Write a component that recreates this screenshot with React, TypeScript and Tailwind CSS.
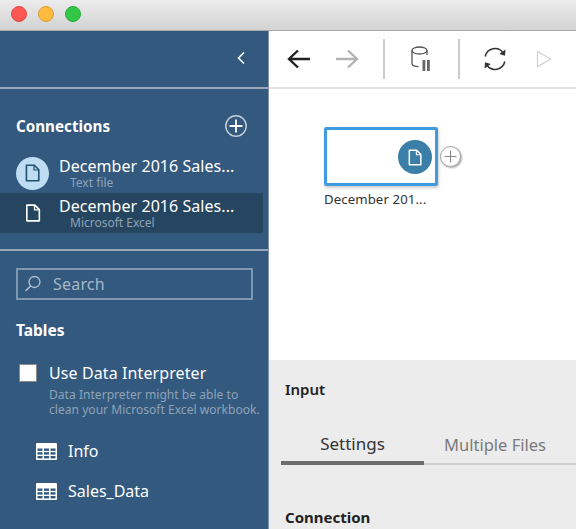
import React from "react";

const FONT = "font-['Noto_Sans','Open_Sans',sans-serif]";

function DocIcon({ className, stroke, fill = "none" }: { className: string; stroke: string; fill?: string }) {
  return (
    <svg viewBox="0 0 16 19" className={className} fill="none">
      <path d="M1.5 1.2H10L14.7 6V17.8H1.5Z" stroke={stroke} strokeWidth="1.7" fill={fill} strokeLinejoin="round" />
      <path d="M9.6 1.2V6.3H14.7" stroke={stroke} strokeWidth="1.3" />
    </svg>
  );
}

function TableIcon() {
  return (
    <svg viewBox="0 0 21 17" className="w-[21px] h-[17px] shrink-0">
      <rect width="21" height="17" rx="1" fill="#fff" />
      <g fill="#33597f">
        <rect x="1.5" y="5.5" width="5" height="2.4" />
        <rect x="8" y="5.5" width="5" height="2.4" />
        <rect x="14.5" y="5.5" width="5" height="2.4" />
        <rect x="1.5" y="9.2" width="5" height="2.4" />
        <rect x="8" y="9.2" width="5" height="2.4" />
        <rect x="14.5" y="9.2" width="5" height="2.4" />
        <rect x="1.5" y="13" width="5" height="2.4" />
        <rect x="8" y="13" width="5" height="2.4" />
        <rect x="14.5" y="13" width="5" height="2.4" />
      </g>
    </svg>
  );
}

function Conn({ sub, selected, icon }: { sub: string; selected?: boolean; icon: React.ReactNode }) {
  return (
    <div className={`flex items-start h-10 w-[263px] ${selected ? "bg-[#264560]" : ""}`}>
      <div className="w-[59px] shrink-0 h-10 flex items-center justify-center">{icon}</div>
      <div className="flex flex-col">
        <span className="text-[16px] leading-[20px] text-white whitespace-nowrap tracking-[0.05px] mt-[3px]">December 2016 Sales...</span>
        <span className="text-[12px] leading-[14px] text-[#8ea3b8] pl-[11px] whitespace-nowrap">{sub}</span>
      </div>
    </div>
  );
}

export default function App() {
  return (
    <div className={`${FONT} w-[576px] h-[529px] overflow-hidden flex flex-col bg-white`}>
      <div className="h-[31px] shrink-0 bg-gradient-to-b from-[#ebebeb] to-[#d3d3d3] border-b border-[#a8a8a8] flex items-center gap-[11px] pl-[11px] pb-[2px]">
        <span className="w-[16px] h-[16px] rounded-full bg-[#fc5753] border border-[#df4744]" />
        <span className="w-[16px] h-[16px] rounded-full bg-[#fdbc40] border border-[#de9f34]" />
        <span className="w-[16px] h-[16px] rounded-full bg-[#33c748] border border-[#27aa35]" />
      </div>
      <div className="flex-1 flex min-h-0">
        <aside className="w-[269px] shrink-0 bg-[#33597f] border-r border-[#7d93aa] flex flex-col">
          <div className="h-[58px] shrink-0 flex items-center justify-end pr-[22px] border-b-2 border-[#97a8ba]">
            <svg viewBox="0 0 10 14" className="w-[10px] h-[14px] mt-[-2px]" fill="none">
              <path d="M8 1.5 2.5 7 8 12.5" stroke="#fff" strokeWidth="1.6" />
            </svg>
          </div>
          <div className="flex items-center justify-between pl-4 pr-[20px] mt-[24px] h-[26px]">
            <span className="text-[15.2px] font-bold text-white">Connections</span>
            <svg viewBox="0 0 24 24" className="w-[24px] h-[24px]" fill="none">
              <circle cx="12" cy="12" r="10.2" stroke="#c3ced9" strokeWidth="1.5" />
              <path d="M12 5.5V18.5M5.5 12H18.5" stroke="#fff" strokeWidth="1.8" />
            </svg>
          </div>
          <div className="mt-[14px] flex flex-col">
            <Conn
              sub="Text file"
              icon={
                <span className="w-[33px] h-[33px] ml-[5px] rounded-full bg-[#bedcf2] flex items-center justify-center">
                  <DocIcon className="w-[15px] h-[18px]" stroke="#20526f" />
                </span>
              }
            />
            <Conn
              selected
              sub="Microsoft Excel"
              icon={<DocIcon className="w-[16px] h-[18px] ml-[6px]" stroke="#fff" />}
            />
          </div>
          <div className="mt-[16px] h-[2px] bg-[#97a8ba] shrink-0" />
          <div className="mt-[17px] mx-4 h-[32px] w-[237px] border-2 border-[#7d98b3] flex items-center">
            <svg viewBox="0 0 18 18" className="w-[18px] h-[18px] ml-[6px]" fill="none">
              <circle cx="10.5" cy="7" r="5.5" stroke="#b4c3d2" strokeWidth="1.3" />
              <path d="M6.5 11 1.5 16" stroke="#b4c3d2" strokeWidth="1.5" />
            </svg>
            <span className="ml-[11px] text-[16px] text-[#a6b6c6] tracking-[0.2px]">Search</span>
          </div>
          <div className="mt-[18px] pl-4 text-[15.5px] leading-[24px] font-bold text-white">Tables</div>
          <div className="mt-[21px] flex pl-[19px]">
            <span className="w-[18px] h-[18px] mt-[1px] shrink-0 bg-white border border-[#8f8a86] rounded-[1px]" />
            <div className="ml-3 flex flex-col">
              <span className="text-[16px] leading-[20px] text-white whitespace-nowrap tracking-[0.1px]">Use Data Interpreter</span>
              <span className="text-[12.1px] leading-[15px] text-[#8ea3b8] mt-[4px] whitespace-nowrap">
                Data Interpreter might be able to
                <br />
                clean your Microsoft Excel workbook.
              </span>
            </div>
          </div>
          <div className="mt-[23px] pl-[36px] flex flex-col gap-[18px]">
            <div className="flex items-center gap-[11px] h-[22px]">
              <TableIcon />
              <span className="text-[16px] text-white">Info</span>
            </div>
            <div className="flex items-center gap-[11px] h-[22px]">
              <TableIcon />
              <span className="text-[16px] text-white">Sales_Data</span>
            </div>
          </div>
        </aside>
        <main className="flex-1 flex flex-col min-w-0">
          <div className="h-[58px] shrink-0 border-b-2 border-[#e1e1e1] flex items-center">
            <svg viewBox="0 0 24 20" className="ml-[18px] w-[24px] h-[20px]" fill="none">
              <path d="M23 10H2M11 1.5 2 10l9 8.5" stroke="#222" strokeWidth="2.4" />
            </svg>
            <svg viewBox="0 0 24 20" className="ml-[24px] w-[24px] h-[20px]" fill="none">
              <path d="M1 10H22M13 1.5 22 10l-9 8.5" stroke="#b3b3b3" strokeWidth="2.4" />
            </svg>
            <span className="ml-[24px] w-[2px] h-[40px] bg-[#cccccc]" />
            <svg viewBox="0 0 20 26" className="ml-[26px] w-[20px] h-[26px]" fill="none">
              <path d="M1 4.5V17.5C1 19.5 4 20.6 7.5 20.6M16 4.5V9" stroke="#555" strokeWidth="1.3" />
              <ellipse cx="8.5" cy="4.5" rx="7.5" ry="3.5" stroke="#555" strokeWidth="1.3" />
              <rect x="11.5" y="14" width="2.8" height="11" fill="#666" />
              <rect x="16" y="14" width="2.8" height="11" fill="#666" />
            </svg>
            <span className="ml-[27px] w-[2px] h-[40px] bg-[#cccccc]" />
            <svg viewBox="0 0 24 24" className="ml-[23px] w-[24px] h-[24px]" fill="none">
              <path d="M2.2 9.5A10 10 0 0 1 20.2 6M21.8 14.5A10 10 0 0 1 3.8 18" stroke="#333" strokeWidth="1.5" />
              <path d="M22.5 2.5 22 8.8l-5.8-1.8ZM1.5 21.5 2 15.2l5.8 1.8Z" fill="#333" />
            </svg>
            <svg viewBox="0 0 16 18" className="ml-[29px] w-[16px] h-[18px]" fill="none">
              <path d="M1.5 1.5V16.5L14.5 9Z" stroke="#d4d4d4" strokeWidth="1.3" />
            </svg>
          </div>
          <div className="flex-1 pl-[55px] pt-[38px] min-h-0">
            <div className="flex items-center">
              <div className="relative w-[114px] h-[59px] border-[3px] border-[#3f9ae0] rounded-[2px] shadow-[1px_2px_3px_rgba(0,0,0,0.2)]">
                <span className="absolute right-[3px] top-[10px] w-[34px] h-[34px] rounded-full bg-[#3b7ea8] flex items-center justify-center">
                  <DocIcon className="w-[14px] h-[17px]" stroke="#fff" />
                </span>
              </div>
              <span className="ml-[2px] w-[21px] h-[21px] rounded-full bg-white border border-[#a5a5a5] shadow-[1px_1px_2px_rgba(0,0,0,0.35)] flex items-center justify-center">
                <svg viewBox="0 0 13 13" className="w-[13px] h-[13px]" fill="none">
                  <path d="M6.5 0.5V12.5M0.5 6.5H12.5" stroke="#8a8a8a" strokeWidth="1.1" />
                </svg>
              </span>
            </div>
            <div className="mt-[3px] text-[13.2px] leading-[20px] text-[#333] tracking-[0.1px] whitespace-nowrap">December 201...</div>
          </div>
          <div className="h-[169px] shrink-0 bg-[#ececec] flex flex-col">
            <div className="pl-4 mt-[18px] text-[15px] leading-[22px] font-semibold text-[#222]">Input</div>
            <div className="mt-[31px] ml-3 flex h-[34px] border-b-2 border-[#cfcfcf] relative">
              <div className="w-[143px] h-[34px] border-b-[4px] border-[#6d6d6d] text-center text-[17px] leading-[26px] text-[#333] shrink-0">Settings</div>
              <div className="flex-1 text-center text-[16.5px] leading-[28px] text-[#7a7a7a] pr-[10px] whitespace-nowrap">Multiple Files</div>
            </div>
            <div className="pl-4 mt-[41px] text-[15px] leading-[22px] font-bold text-[#222]">Connection</div>
          </div>
        </main>
      </div>
    </div>
  );
}
